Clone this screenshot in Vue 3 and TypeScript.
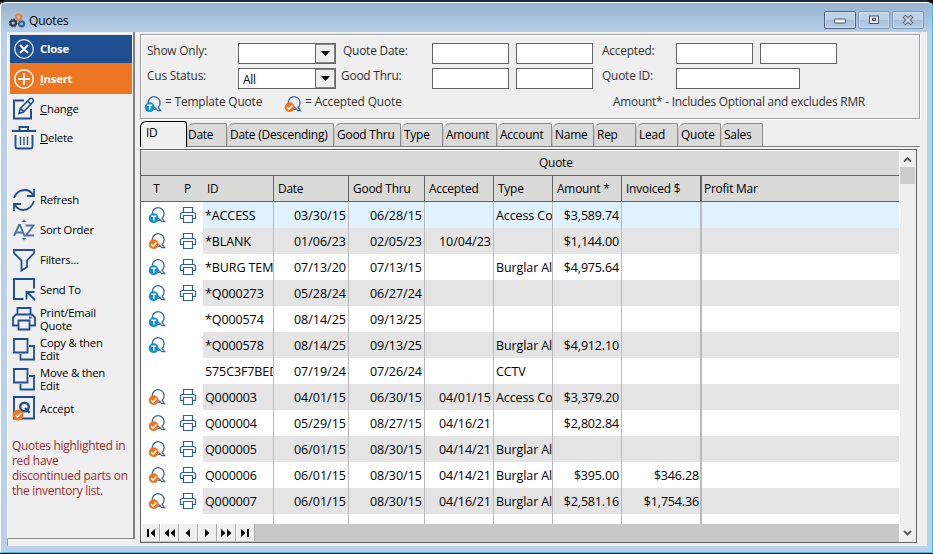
<script setup lang="ts">
import { ref } from 'vue'

interface Action { label: string; icon: string; kind?: string; key?: string }
interface Quote {
  mark: string
  printed: boolean
  cells: string[]
}

const actions: Action[] = [
  { label: 'Close', icon: 'close', kind: 'close' },
  { label: 'nsert', key: 'I', icon: 'insert', kind: 'insert' },
  { label: 'hange', key: 'C', icon: 'change' },
  { label: 'elete', key: 'D', icon: 'delete', kind: 'last' },
  { label: 'Refresh', icon: 'refresh' },
  { label: 'Sort Order', icon: 'sort' },
  { label: 'Filters...', icon: 'filter' },
  { label: 'Send To', icon: 'send', kind: 'short' },
  { label: 'Print/Email Quote', icon: 'print' },
  { label: 'Copy & then Edit', icon: 'copy' },
  { label: 'Move & then Edit', icon: 'copy' },
  { label: 'Accept', icon: 'accept', kind: 'short' },
]

const tabs = ['ID', 'Date', 'Date (Descending)', 'Good Thru', 'Type', 'Amount', 'Account', 'Name', 'Rep', 'Lead', 'Quote', 'Sales']
const activeTab = ref('ID')
const columns = ['ID', 'Date', 'Good Thru', 'Accepted', 'Type', 'Amount *', 'Invoiced $', 'Profit Mar']
const ac = 'Access Co'
const ba = 'Burglar Al'

const rows: Quote[] = [
  { mark: 't', printed: true, cells: ['*ACCESS', '03/30/15', '06/28/15', '', ac, '$3,589.74', '', ''] },
  { mark: 'a', printed: true, cells: ['*BLANK', '01/06/23', '02/05/23', '10/04/23', '', '$1,144.00', '', ''] },
  { mark: 't', printed: true, cells: ['*BURG TEM', '07/13/20', '07/13/15', '', ba, '$4,975.64', '', ''] },
  { mark: 't', printed: true, cells: ['*Q000273', '05/28/24', '06/27/24', '', '', '', '', ''] },
  { mark: 't', printed: false, cells: ['*Q000574', '08/14/25', '09/13/25', '', '', '', '', ''] },
  { mark: 't', printed: false, cells: ['*Q000578', '08/14/25', '09/13/25', '', ba, '$4,912.10', '', ''] },
  { mark: '', printed: false, cells: ['575C3F7BED', '07/19/24', '07/26/24', '', 'CCTV', '', '', ''] },
  { mark: 'a', printed: true, cells: ['Q000003', '04/01/15', '06/30/15', '04/01/15', ac, '$3,379.20', '', ''] },
  { mark: 'a', printed: true, cells: ['Q000004', '05/29/15', '08/27/15', '04/16/21', '', '$2,802.84', '', ''] },
  { mark: 'a', printed: true, cells: ['Q000005', '06/01/15', '08/30/15', '04/14/21', ba, '', '', ''] },
  { mark: 'a', printed: true, cells: ['Q000006', '06/01/15', '08/30/15', '04/14/21', ba, '$395.00', '$346.28', ''] },
  { mark: 'a', printed: true, cells: ['Q000007', '06/01/15', '08/30/15', '04/16/21', ba, '$2,581.16', '$1,754.36', ''] },
]

const navPaths = [
  'M5 4h2v8H5zM13 4v8L8.500 8z',
  'M8 4v8L3.500 8zM14 4v8L9.500 8z',
  'M10 4v8L5.500 8z',
  'M6 4v8l4.500-4z',
  'M3 4v8l4.500-4zM9 4v8l4.500-4z',
  'M4 4v8l4.500-4zM10 4h2v8h-2z',
]
</script>

<template>
  <svg class="defs" width="0" height="0">
    <symbol id="close" viewBox="0 0 26 26">
      <circle cx="13" cy="13" r="9.300" fill="none" stroke="#dfe9f7" stroke-width="1.300" />
      <path d="M9 9l8 8M17 9l-8 8" stroke="#fff" stroke-width="1.800" />
    </symbol>
    <symbol id="insert" viewBox="0 0 26 26">
      <circle cx="13" cy="13" r="9.300" fill="none" stroke="#fff" stroke-width="1.500" />
      <path d="M13 7v12M7 13h12" stroke="#fff" stroke-width="1.800" />
    </symbol>
    <symbol id="change" viewBox="0 0 26 26">
      <path d="M13 4.500H3V22.500H20V13" fill="none" stroke="#1f4f91" stroke-width="2" />
      <path d="M8 17.500l1.300-5L19 2.700q1.500-1 2.800.3t.2 2.700L12.500 16zM16.500 5l4 3.800M9.500 12.500l3.200 3.200" fill="none" stroke="#1f4f91" stroke-width="1.600" />
    </symbol>
    <symbol id="delete" viewBox="0 0 26 26">
      <path d="M1 6h24M8.500 5.500V2h8.500v3.500M4.500 10v11.500q0 2 2 2h13q2 0 2-2V10" fill="none" stroke="#1f4f91" stroke-width="1.900" />
      <path d="M9.500 12v8M13 12v8M16.500 12v8" stroke="#1f4f91" stroke-width="1.300" />
    </symbol>
    <symbol id="refresh" viewBox="0 0 26 26">
      <path d="M3 11Q6 3 14 3q5 0 8 5M23 2v7h-7M23 14Q20 23 12 23q-5 0-8-5M3 24v-7h7" fill="none" stroke="#1f4f91" stroke-width="1.800" />
    </symbol>
    <symbol id="sort" viewBox="0 0 26 26">
      <path d="M3 19L8 8h1l4.500 11M5 15.500h7M14.500 8.500h8L15 18.500h8" fill="none" stroke="#4b72a8" stroke-width="1.900" />
      <path d="M10.500 5L13 2.500 15.500 5zM10.500 21L13 23.500l2.500-2.500z" fill="#4b72a8" />
    </symbol>
    <symbol id="filter" viewBox="0 0 26 26">
      <path d="M3 3h20v3l-7 7.500V20l-5.500 3.500v-10L3 6z" fill="none" stroke="#1f4f91" stroke-width="1.800" />
    </symbol>
    <symbol id="send" viewBox="0 0 26 26">
      <path d="M12.500 23H3V3h20v9.500" fill="none" stroke="#1f4f91" stroke-width="2" />
      <path d="M24 24l-8-8M15.500 23.500V16h8" fill="none" stroke="#1f4f91" stroke-width="1.900" />
    </symbol>
    <symbol id="print" viewBox="0 0 26 26">
      <path d="M6.500 8V2h13v6M6.500 19.500H2v-8l3-3h16l3 3v8h-4.500M7.500 14.500h11v9h-11zM18 11.500h2.500" fill="none" stroke="#1f4f91" stroke-width="1.800" />
    </symbol>
    <symbol id="copy" viewBox="0 0 26 26">
      <path d="M3 3h13.500v13.500H3zM18 10h5v13.500H9.500V18" fill="none" stroke="#1f4f91" stroke-width="1.800" />
    </symbol>
    <symbol id="accept" viewBox="0 0 26 26">
      <path d="M3 2h20v21.500H3z" fill="none" stroke="#1f4f91" stroke-width="1.900" />
      <circle cx="13.500" cy="12" r="4.300" fill="none" stroke="#1f4f91" stroke-width="2.400" />
      <path d="M14 13l4.500 4.800" stroke="#1f4f91" stroke-width="2.200" />
      <circle cx="7" cy="20" r="5.500" fill="#ee7623" />
      <path d="M4.500 20l2 2 3.700-4" fill="none" stroke="#fff" stroke-width="1.300" />
    </symbol>
    <symbol id="mark-q" viewBox="0 0 18 18">
      <path d="M4.300 8A5.900 5.900 0 1 1 14 12.200l2.600 3.300h-3q-1.600-2.600-3.800-3.500M10 14.300q1.500.3 3-.6" fill="none" stroke="#3c68a3" stroke-width="1.250" />
    </symbol>
    <symbol id="mark-t" viewBox="0 0 18 18">
      <use href="#mark-q" />
      <circle cx="5.700" cy="12.200" r="4.900" fill="#0f8fd3" />
      <path d="M3.400 10.200h4.800M5.800 10.200v4.600" fill="none" stroke="#fff" stroke-width="1.400" />
    </symbol>
    <symbol id="mark-a" viewBox="0 0 18 18">
      <use href="#mark-q" />
      <circle cx="5.700" cy="12.200" r="4.900" fill="#ee7623" />
      <path d="M3.200 12.300l1.900 1.900 3.300-3.700" fill="none" stroke="#fff" stroke-width="1.500" />
    </symbol>
    <symbol id="printer" viewBox="0 0 18 18">
      <path d="M4.500 6V1.500h9V6M4.500 12.500h-3v-5l1.700-1h11.600l1.700 1v5h-3M4.500 9.500h9v7h-9z" fill="none" stroke="#2f5c9d" stroke-width="1.150" />
    </symbol>
  </svg>

  <div class="window">
    <header class="titlebar">
      <svg class="logo" width="17" height="16" viewBox="0 0 17 16">
        <g fill="none" stroke-width="2.200">
          <circle cx="9.700" cy="4.200" r="2.700" stroke="#e8833a" />
          <circle cx="4.200" cy="10" r="2.700" stroke="#333b42" />
          <circle cx="12.600" cy="10.800" r="2.500" stroke="#31639d" />
        </g>
        <circle cx="4.200" cy="10" r="4" fill="none" stroke="#333b42" stroke-width="1" stroke-dasharray="1.500 1.600" />
      </svg>
      <span class="title">Quotes</span>
      <div class="controls">
        <button class="control strong"><svg width="12" height="10"><rect x=".5" y="4" width="11" height="4" rx="1" fill="#f4f4f4" stroke="#4c5563" /></svg></button>
        <button class="control"><svg width="12" height="10"><rect x="1.500" y="1" width="9" height="7.500" fill="#e5e5e5" stroke="#4c5563" /><rect x="4.500" y="3.500" width="3" height="2" fill="#9db7d5" stroke="#4c5563" /></svg></button>
        <button class="control"><svg width="12" height="10"><path d="M2 1l8 8M10 1L2 9" stroke="#566071" stroke-width="4" /><path d="M2.600 1.600l6.800 6.800M9.400 1.600L2.600 8.400" stroke="#dedede" stroke-width="2" /></svg></button>
      </div>
    </header>

    <div class="body">
      <aside class="sidebar">
        <nav class="actions">
          <button v-for="a in actions" :key="a.label" class="action" :class="a.kind">
            <svg class="action-icon" width="26" height="26"><use :href="'#' + a.icon" /></svg>
            <span class="action-label"><u v-if="a.key">{{ a.key }}</u>{{ a.label }}</span>
          </button>
          <p class="note">Quotes highlighted in<br>red have<br>discontinued parts on<br>the inventory list.</p>
        </nav>
        <div class="side-foot"></div>
      </aside>

      <main class="main">
        <section class="filters">
          <div class="line">
            <label class="l1">Show Only:</label>
            <div class="combo"><span></span><i><svg width="9" height="6"><path d="M0 0h9L4.500 5z" /></svg></i></div>
            <label class="l2">Quote Date:</label>
            <input class="field" /><input class="field" />
            <label class="l3">Accepted:</label>
            <input class="field" /><input class="field" />
          </div>
          <div class="line">
            <label class="l1">Cus Status:</label>
            <div class="combo"><span>All</span><i><svg width="9" height="6"><path d="M0 0h9L4.500 5z" /></svg></i></div>
            <label class="l2 shift">Good Thru:</label>
            <input class="field" /><input class="field" />
            <label class="l3">Quote ID:</label>
            <input class="field wide" />
          </div>
          <div class="legend">
            <svg width="18" height="18"><use href="#mark-t" /></svg>
            <span class="lg1">= Template Quote</span>
            <svg width="18" height="18"><use href="#mark-a" /></svg>
            <span class="lg2">= Accepted Quote</span>
            <span class="lg3">Amount* - Includes Optional and excludes RMR</span>
          </div>
        </section>

        <div class="tabs">
          <button v-for="t in tabs" :key="t" class="tab" :class="{ active: t === activeTab }" @click="activeTab = t"><span>{{ t }}</span></button>
        </div>

        <section class="table">
          <div class="grid-area">
            <div class="group">Quote</div>
            <div class="row head">
              <div class="icon-cell">T</div><div class="icon-cell p">P</div>
              <div v-for="(c, i) in columns" :key="c" class="cell" :class="'c' + i">{{ c }}</div>
            </div>
            <div v-for="(r, n) in rows" :key="n" class="row" :class="{ alt: n % 2 === 1, selected: n === 0 }">
              <div class="icon-cell"><svg v-if="r.mark" width="18" height="18"><use :href="'#mark-' + r.mark" /></svg></div>
              <div class="icon-cell p"><svg v-if="r.printed" width="18" height="18"><use href="#printer" /></svg></div>
              <div v-for="(c, i) in r.cells" :key="i" class="cell" :class="'c' + i">{{ c }}</div>
            </div>
            <div class="row blank">
              <div class="icon-cell"></div><div class="icon-cell p"></div>
              <div v-for="(c, i) in columns" :key="c" class="cell" :class="'c' + i"></div>
            </div>
            <div class="navbar">
              <button v-for="p in navPaths" :key="p" class="nav"><svg width="17" height="16"><path :d="p" /></svg></button>
            </div>
          </div>
          <div class="scroll">
            <svg width="16" height="16" viewBox="0 0 16 16"><path d="M4 10.500L7.500 7 11 10.500" fill="none" stroke="#555" stroke-width="1.800" /></svg>
            <div class="thumb"></div>
            <svg class="down" width="16" height="16" viewBox="0 0 16 16"><path d="M4 5L7.500 8.500 11 5" fill="none" stroke="#555" stroke-width="1.800" /></svg>
          </div>
        </section>
      </main>
    </div>
  </div>
</template>

<style>
html, body { margin: 0; background: #000; }
</style>

<style scoped>
* { box-sizing: border-box; }
button, input { margin: 0; padding: 0; font: inherit; letter-spacing: inherit; color: inherit; border: 0; background: none; border-radius: 0; }
svg { display: block; flex: none; }
.defs { position: absolute; }
.window {
  height: 553px; padding: 0 5px 4px 6px; border: 1px solid; border-color: #1d2b38 #35c7ee #28c3e6 #fff;
  border-top-width: 2px; border-radius: 6px 6px 0 0; box-shadow: inset 0 1px #fff;
  background: linear-gradient(#99b4d1 2px, #b9d1ea 32px, #b9d1ea);
  font: 11.9px/15px "Open Sans", "Noto Sans", sans-serif; letter-spacing: -.2px; color: #000;
}
.titlebar { height: 30px; display: flex; align-items: flex-start; padding: 9px 3px 0 2px; }
.title { margin: 2px 0 0 3px; font-size: 12px; }
.logo { margin-top: 2px; }
.controls { margin-left: auto; display: flex; gap: 2px; }
.control { width: 32px; height: 18px; display: flex; align-items: center; justify-content: center; border: 1px solid #7d98ba; border-radius: 2px; background: linear-gradient(#bdd2e9 48%, #a5bfdc 50%, #b7cee8); box-shadow: inset 0 0 0 1px #cbdcf0; }
.control.strong { border-color: #52637e; }
.body { height: 514px; display: flex; background: #efefef; }
.sidebar { width: 129px; flex: none; display: flex; flex-direction: column; }
.actions { height: 507px; padding: 3px 1px 0 2px; display: flex; flex-direction: column; border-left: 1px solid #fff; border-right: 2px solid #808080; border-bottom: 1px solid #8c8c8c; margin-right: 1px; }
.side-foot { flex: 1; border-left: 1px solid #999; margin-right: 1px; }
.action { height: 30px; flex: none; display: flex; align-items: center; text-align: left; padding-left: 1px; line-height: 13px; width: 122px; }
.action-icon { margin-top: -1px; }
.action-label { margin-left: 3px; width: 75px; font-size: 11.3px; margin-top: -1px; }
.action.close { background: #1f4f91; color: #fff; font-weight: 700; height: 28px; margin-bottom: 1px; box-shadow: 0 1px #8a93a3; }
.action.close .action-icon { margin-top: 0; }
.action.insert { background: #ee7623; color: #fff; font-weight: 700; }
.action.short { height: 29px; }
.action.last { height: 29px; margin-bottom: 32px; }
.action.last .action-label { margin-top: -2px; }
.action u { text-underline-offset: 1px; }
.note { margin: 15px 0 0 2px; width: 122px; color: #a52a2f; line-height: 15px; white-space: nowrap; letter-spacing: -.26px; }
.main { flex: 1; min-width: 0; display: flex; flex-direction: column; padding: 2px 6px 0 4px; }
.filters { width: 780px; height: 85px; flex: none; border: 1px solid #a0a0a0; box-shadow: inset 1px 1px #fff, 1px 1px #fff; padding: 8px 0 0 6px; color: #333; }
.line { display: flex; height: 25px; align-items: flex-start; }
.line label { line-height: 14px; }
.l1 { width: 91px; }
.l2 { width: 89px; }
.l2.shift { margin-left: -2px; width: 91px; }
.l3 { width: 76px; padding-left: 2px; }
.combo { width: 98px; height: 21px; display: flex; border: 1px solid #646464; background: #fff; margin-right: 7px; }
.combo span { flex: 1; color: #000; padding: 3px 0 0 4px; }
.combo i { width: 20px; background: #efefef; border: 1px solid #888; border-left: 1px solid #646464; display: flex; align-items: center; justify-content: center; padding-top: 1px; }
.field { width: 77px; height: 21px; border: 1px solid #646464; background: #fff; margin-right: 7px; flex: none; }
.wide { width: 124px; }
.legend { display: flex; align-items: center; height: 18px; margin: 0 0 0 -3px; white-space: nowrap; line-height: 14px; }
.legend svg { margin-top: 4px; }
.legend span { margin-top: -2px; }
.lg1 { margin-left: 3px; width: 119px; letter-spacing: -.15px; }
.lg2 { margin-left: 3px; width: 308px; letter-spacing: -.12px; }
.lg3 { letter-spacing: -.24px; }
.tabs { height: 26px; margin-top: 2px; width: 780px; display: grid; grid-template-columns: 47px 40px 107px 67px 42px 54px 55px 42px 42px 42px 43px 42px; align-items: end; border-bottom: 1px solid #808080; flex: none; }
.tab { height: 23px; background: #dadad9; border-top: 1px solid #8c8c8c; border-right: 1px solid #8c8c8c; border-left: 1px solid #c4c4c4; border-radius: 7px 2px 0 0; text-align: left; white-space: nowrap; padding: 0 0 1px; }
.tab:nth-child(n+3) { padding-left: 2px; }
.tab.active { height: 26px; margin-bottom: -1px; background: #efefef; border: 1px solid #000; border-bottom: 0; border-radius: 6px 3px 0 0; padding: 0 0 4px 5px; }
.table { width: 777px; height: 394px; margin-top: 2px; flex: none; display: flex; border: 1px solid #646464; padding-top: 1px; box-shadow: inset 0 1px #fff; background: #fff; }
.grid-area { width: 758px; display: flex; flex-direction: column; }
.group { height: 25px; background: #dadad9; border-bottom: 1px solid #646464; line-height: 23px; padding-left: 398px; }
.row { display: flex; height: 26px; background: #fff; flex: none; font-size: 12.5px; letter-spacing: 0; line-height: 27px; }
.icon-cell { width: 31px; flex: none; display: flex; align-items: center; justify-content: center; background: #fff; padding-left: 1px; }
.cell { flex: none; overflow: hidden; white-space: nowrap; border-right: 1px solid #bababa; padding: 0 2px; text-align: right; }
.selected .cell { background: #e0f2fd; }
.alt .cell { background: #e4e4e4; }
.c0 { width: 71px; text-align: left; letter-spacing: -.1px; }
.c1 { width: 75px; }
.c2 { width: 76px; }
.c3 { width: 69px; }
.c4 { width: 59px; text-align: left; letter-spacing: -.1px; }
.c5 { width: 69px; letter-spacing: -.15px; }
.c6 { width: 80px; border-right-width: 2px; letter-spacing: -.15px; padding-right: 1px; }
.c7 { width: 197px; border-right: 0; }
.head { font-size: 11.9px; border-bottom: 1px solid #646464; line-height: 25px; background: #dadad9; }
.head .icon-cell { background: #dadad9; padding-left: 0; }
.head .cell { border-color: #646464; text-align: left; padding-left: 4px; letter-spacing: -.2px; }
.head .c7 { padding-left: 2px; }
.blank { height: 10px; }
.navbar { height: 18px; background: #c8c8c8; display: flex; }
.nav { width: 19px; height: 17px; background: #f0f0f0; border-right: 1px solid #a8a8a8; border-left: 1px solid #fff; }
.scroll { width: 17px; background: #efefef; border-left: 1px solid #fff; display: flex; flex-direction: column; }
.thumb { height: 17px; width: 15px; background: #cdcdcd; }
.down { margin-top: auto; }
</style>
